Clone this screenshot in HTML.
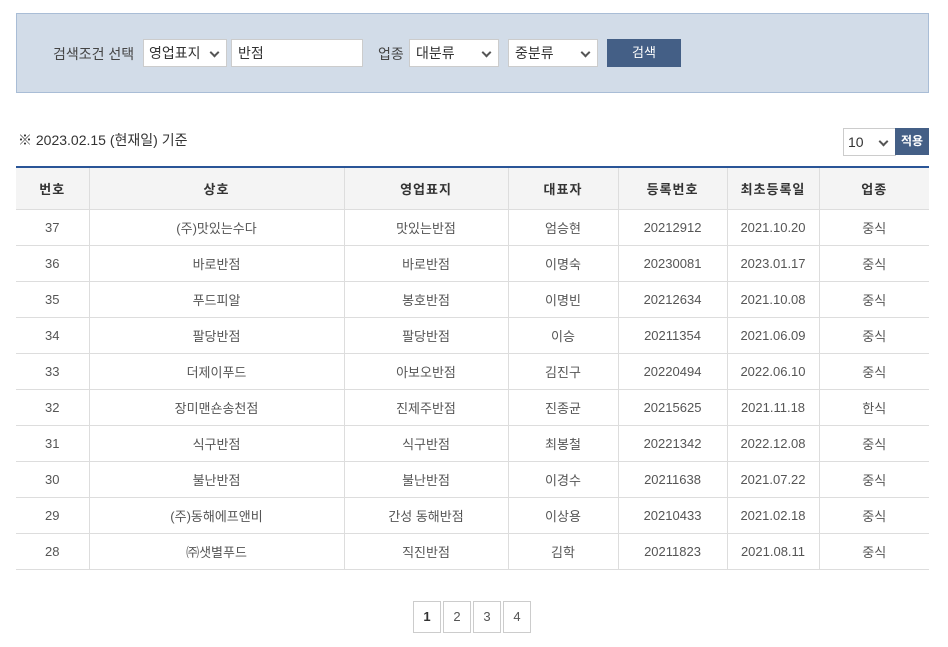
<!DOCTYPE html>
<html><head><meta charset="utf-8"><style>
*{box-sizing:border-box;margin:0;padding:0}
body{width:948px;height:647px;background:#fff;font-family:"Liberation Sans","Noto Sans CJK KR",sans-serif;color:#333;font-size:14px;position:relative;overflow:hidden}
.panel{position:absolute;left:16px;top:13px;width:913px;height:80px;background:#d2dce8;border:1px solid #a9bdd6}
.a{position:absolute}
.sel,.inp{position:absolute;background:#fff;border:1px solid #ccc;height:28px;font-size:14px;line-height:26px;padding-left:6px;color:#333}
.chev{position:absolute;right:8px;top:9px;width:7px;height:7px;border-right:2px solid #555;border-bottom:2px solid #555;transform:rotate(45deg)}
.btn{position:absolute;left:607px;top:39px;width:74px;height:28px;background:#445f86;color:#fff;font-size:13px;text-align:center;line-height:28px}
table{position:absolute;left:16px;top:166px;width:913px;border-collapse:collapse;border-top:2px solid #2a5597}
th{background:#f4f4f4;height:42px;font-weight:bold;font-size:13px;color:#333;border:1px solid #ddd;border-top:none;letter-spacing:1px}
td{height:36px;text-align:center;border:1px solid #ddd;font-size:13px;color:#555}
th:first-child,td:first-child{border-left:none}th:last-child,td:last-child{border-right:none}
.pg{position:absolute;top:601px;width:28px;height:32px;border:1px solid #ccc;text-align:center;line-height:30px;font-size:13px;color:#555}
</style></head><body>
<div class="panel"></div>
<div class="a" style="left:53px;top:44px;font-size:14px;color:#444">검색조건 선택</div>
<div class="sel" style="left:143px;top:39px;width:84px;padding-left:5px">영업표지<span class="chev"></span></div>
<div class="inp" style="left:231px;top:39px;width:132px">반점</div>
<div class="a" style="left:378px;top:44px;color:#444">업종</div>
<div class="sel" style="left:409px;top:39px;width:90px">대분류<span class="chev"></span></div>
<div class="sel" style="left:508px;top:39px;width:90px">중분류<span class="chev"></span></div>
<div class="btn">검색</div>
<div class="a" style="left:18px;top:130px;font-size:14px;color:#333">※ 2023.02.15 (현재일) 기준</div>
<div class="sel" style="left:843px;top:128px;width:53px;height:28px;font-size:14px;padding-left:4px">10<span class="chev"></span></div>
<div class="a" style="left:895px;top:128px;width:34px;height:27px;background:#445f86;color:#fff;font-size:12px;font-weight:bold;text-align:center;line-height:27px">적용</div>
<table>
<tr><th style="width:73px">번호</th><th style="width:255px">상호</th><th style="width:164px">영업표지</th><th style="width:110px">대표자</th><th style="width:109px">등록번호</th><th style="width:92px">최초등록일</th><th>업종</th></tr>
<tr><td>37</td><td>(주)맛있는수다</td><td>맛있는반점</td><td>엄승현</td><td>20212912</td><td>2021.10.20</td><td>중식</td></tr>
<tr><td>36</td><td>바로반점</td><td>바로반점</td><td>이명숙</td><td>20230081</td><td>2023.01.17</td><td>중식</td></tr>
<tr><td>35</td><td>푸드피알</td><td>봉호반점</td><td>이명빈</td><td>20212634</td><td>2021.10.08</td><td>중식</td></tr>
<tr><td>34</td><td>팔당반점</td><td>팔당반점</td><td>이승</td><td>20211354</td><td>2021.06.09</td><td>중식</td></tr>
<tr><td>33</td><td>더제이푸드</td><td>아보오반점</td><td>김진구</td><td>20220494</td><td>2022.06.10</td><td>중식</td></tr>
<tr><td>32</td><td>장미맨숀송천점</td><td>진제주반점</td><td>진종균</td><td>20215625</td><td>2021.11.18</td><td>한식</td></tr>
<tr><td>31</td><td>식구반점</td><td>식구반점</td><td>최봉철</td><td>20221342</td><td>2022.12.08</td><td>중식</td></tr>
<tr><td>30</td><td>불난반점</td><td>불난반점</td><td>이경수</td><td>20211638</td><td>2021.07.22</td><td>중식</td></tr>
<tr><td>29</td><td>(주)동해에프앤비</td><td>간성 동해반점</td><td>이상용</td><td>20210433</td><td>2021.02.18</td><td>중식</td></tr>
<tr><td>28</td><td>㈜샛별푸드</td><td>직진반점</td><td>김학</td><td>20211823</td><td>2021.08.11</td><td>중식</td></tr>
</table>
<div class="pg" style="left:413px;font-weight:bold;color:#333">1</div>
<div class="pg" style="left:443px">2</div>
<div class="pg" style="left:473px">3</div>
<div class="pg" style="left:503px">4</div>
</body></html>
